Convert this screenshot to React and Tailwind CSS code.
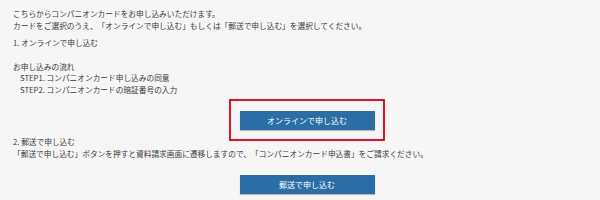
import React from 'react'

const Btn = ({ children }) => (
    <button className="w-[135px] h-[19px] bg-[#2b6ea6] text-white text-[8px] leading-none flex items-center justify-center shadow-[0_1px_1px_rgba(0,0,0,0.25)]">
        {children}
    </button>
)

export default function App() {
    return (
        <div
            lang="ja"
            className="w-[600px] h-[200px] bg-[#f6f6f6] text-[#3a3a3a] text-[7.7px] leading-[11.5px] overflow-hidden [text-spacing-trim:space-all]"
            style={{ fontFamily: '"Noto Sans CJK JP", "Noto Sans", sans-serif' }}
        >
            <div className="pl-[13px] pt-[8px]">
                <p>こちらからコンパニオンカードをお申し込みいただけます。</p>
                <p>カードをご選択のうえ、「オンラインで申し込む」もしくは「郵送で申し込む」を選択してください。</p>
                <p className="mt-[6px]">1. オンラインで申し込む</p>
                <p className="mt-[12px]">お申し込みの流れ</p>
                <p className="pl-[7px]">STEP1. コンパニオンカード申し込みの同意</p>
                <p className="pl-[7px]">STEP2. コンパニオンカードの暗証番号の入力</p>
            </div>

            {/* 赤枠で囲まれたオンライン申込ボタン */}
            <div className="flex justify-center pl-[14px] mt-[4px]">
                <div className="border-2 border-[#e0102a] w-[156px] h-[42px] flex items-center justify-center pt-[1px]">
                    <Btn>オンラインで申し込む</Btn>
                </div>
            </div>

            <div className="pl-[13px] -mt-[5px]">
                <p>2. 郵送で申し込む</p>
                <p>「郵送で申し込む」ボタンを押すと資料請求画面に遷移しますので、「コンパニオンカード申込書」をご請求ください。</p>
            </div>

            <div className="flex justify-center pl-[14px] mt-[16px]">
                <Btn>郵送で申し込む</Btn>
            </div>
        </div>
    )
}
